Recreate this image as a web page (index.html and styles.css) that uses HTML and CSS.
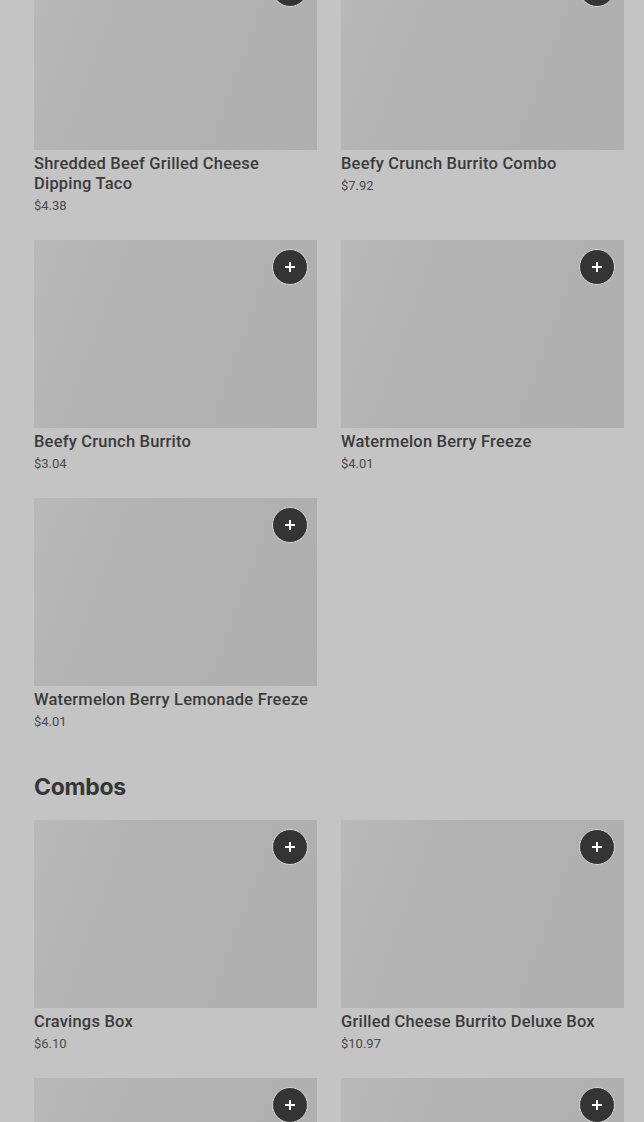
FILE: index.html
```html
<!DOCTYPE html>
<html lang="en">
<head>
  <meta charset="UTF-8">
  <meta name="viewport" content="width=device-width, initial-scale=1.0">
  <title>Menu</title>
  <link rel="stylesheet" href="styles.css">
</head>
<body>

  <main class="menu">
    <section class="category">
      <div class="grid">
        <div class="item">
          <div class="photo"><button class="add" type="button"><svg viewBox="0 0 12 12" width="12" height="12"><path d="M6 1v10M1 6h10" stroke="#fff" stroke-width="2"/></svg></button></div>
          <p class="name">Shredded Beef Grilled Cheese Dipping Taco</p>
          <p class="price">$4.38</p>
        </div>
        <div class="item">
          <div class="photo"><button class="add" type="button"><svg viewBox="0 0 12 12" width="12" height="12"><path d="M6 1v10M1 6h10" stroke="#fff" stroke-width="2"/></svg></button></div>
          <p class="name">Beefy Crunch Burrito Combo</p>
          <p class="price">$7.92</p>
        </div>
        <div class="item">
          <div class="photo"><button class="add" type="button"><svg viewBox="0 0 12 12" width="12" height="12"><path d="M6 1v10M1 6h10" stroke="#fff" stroke-width="2"/></svg></button></div>
          <p class="name">Beefy Crunch Burrito</p>
          <p class="price">$3.04</p>
        </div>
        <div class="item">
          <div class="photo"><button class="add" type="button"><svg viewBox="0 0 12 12" width="12" height="12"><path d="M6 1v10M1 6h10" stroke="#fff" stroke-width="2"/></svg></button></div>
          <p class="name">Watermelon Berry Freeze</p>
          <p class="price">$4.01</p>
        </div>
        <div class="item">
          <div class="photo"><button class="add" type="button"><svg viewBox="0 0 12 12" width="12" height="12"><path d="M6 1v10M1 6h10" stroke="#fff" stroke-width="2"/></svg></button></div>
          <p class="name">Watermelon Berry Lemonade Freeze</p>
          <p class="price">$4.01</p>
        </div>
      </div>
    </section>

    <section class="category">
      <h2>Combos</h2>
      <div class="grid">
        <div class="item">
          <div class="photo"><button class="add" type="button"><svg viewBox="0 0 12 12" width="12" height="12"><path d="M6 1v10M1 6h10" stroke="#fff" stroke-width="2"/></svg></button></div>
          <p class="name">Cravings Box</p>
          <p class="price">$6.10</p>
        </div>
        <div class="item">
          <div class="photo"><button class="add" type="button"><svg viewBox="0 0 12 12" width="12" height="12"><path d="M6 1v10M1 6h10" stroke="#fff" stroke-width="2"/></svg></button></div>
          <p class="name">Grilled Cheese Burrito Deluxe Box</p>
          <p class="price">$10.97</p>
        </div>
        <div class="item">
          <div class="photo"><button class="add" type="button"><svg viewBox="0 0 12 12" width="12" height="12"><path d="M6 1v10M1 6h10" stroke="#fff" stroke-width="2"/></svg></button></div>
          <p class="name">Chicken Chipotle Melt Box</p>
          <p class="price">$8.49</p>
        </div>
        <div class="item">
          <div class="photo"><button class="add" type="button"><svg viewBox="0 0 12 12" width="12" height="12"><path d="M6 1v10M1 6h10" stroke="#fff" stroke-width="2"/></svg></button></div>
          <p class="name">Nachos BellGrande Combo</p>
          <p class="price">$9.19</p>
        </div>
      </div>
    </section>
  </main>

</body>
</html>
```

FILE: styles.css
```css
/* Menu grid, dimmed behind an overlay */
html, body {
  height: 100%;
  overflow: hidden;
}

body {
  margin: 0;
  background-color: #c4c4c4;
  font-family: Roboto, "Liberation Sans", sans-serif;
  color: #3a3a3a;
}

.menu {
  margin-top: -38px;
  padding: 0 20px 0 34px;
}

.category h2 {
  margin: 42px 0 19px;
  font-family: Inter, "Noto Sans", sans-serif;
  font-size: 23px;
  font-weight: 700;
  line-height: 28px;
  letter-spacing: -0.3px;
  color: #363636;
}

.grid {
  display: grid;
  grid-template-columns: 1fr 1fr;
  column-gap: 24px;
  row-gap: 25px;
}

.photo {
  position: relative;
  height: 188px;
  background: linear-gradient(110deg, #b9b9b9 0%, #b2b2b2 35%, #afafaf 100%);
}

.add {
  position: absolute;
  top: 9px;
  right: 9px;
  width: 36px;
  height: 36px;
  padding: 0;
  border: 1px solid #d6d6d6;
  border-radius: 50%;
  background-color: #343434;
  display: flex;
  align-items: center;
  justify-content: center;
  cursor: pointer;
}

.name {
  margin: 4px 0 0;
  font-size: 16.5px;
  line-height: 20px;
  font-weight: 500;
  letter-spacing: 0.2px;
  color: #3b3b3b;
}

.price {
  margin: 3px 0 0;
  font-size: 13px;
  line-height: 18px;
  font-weight: 400;
  color: #4a4a4a;
}
```
